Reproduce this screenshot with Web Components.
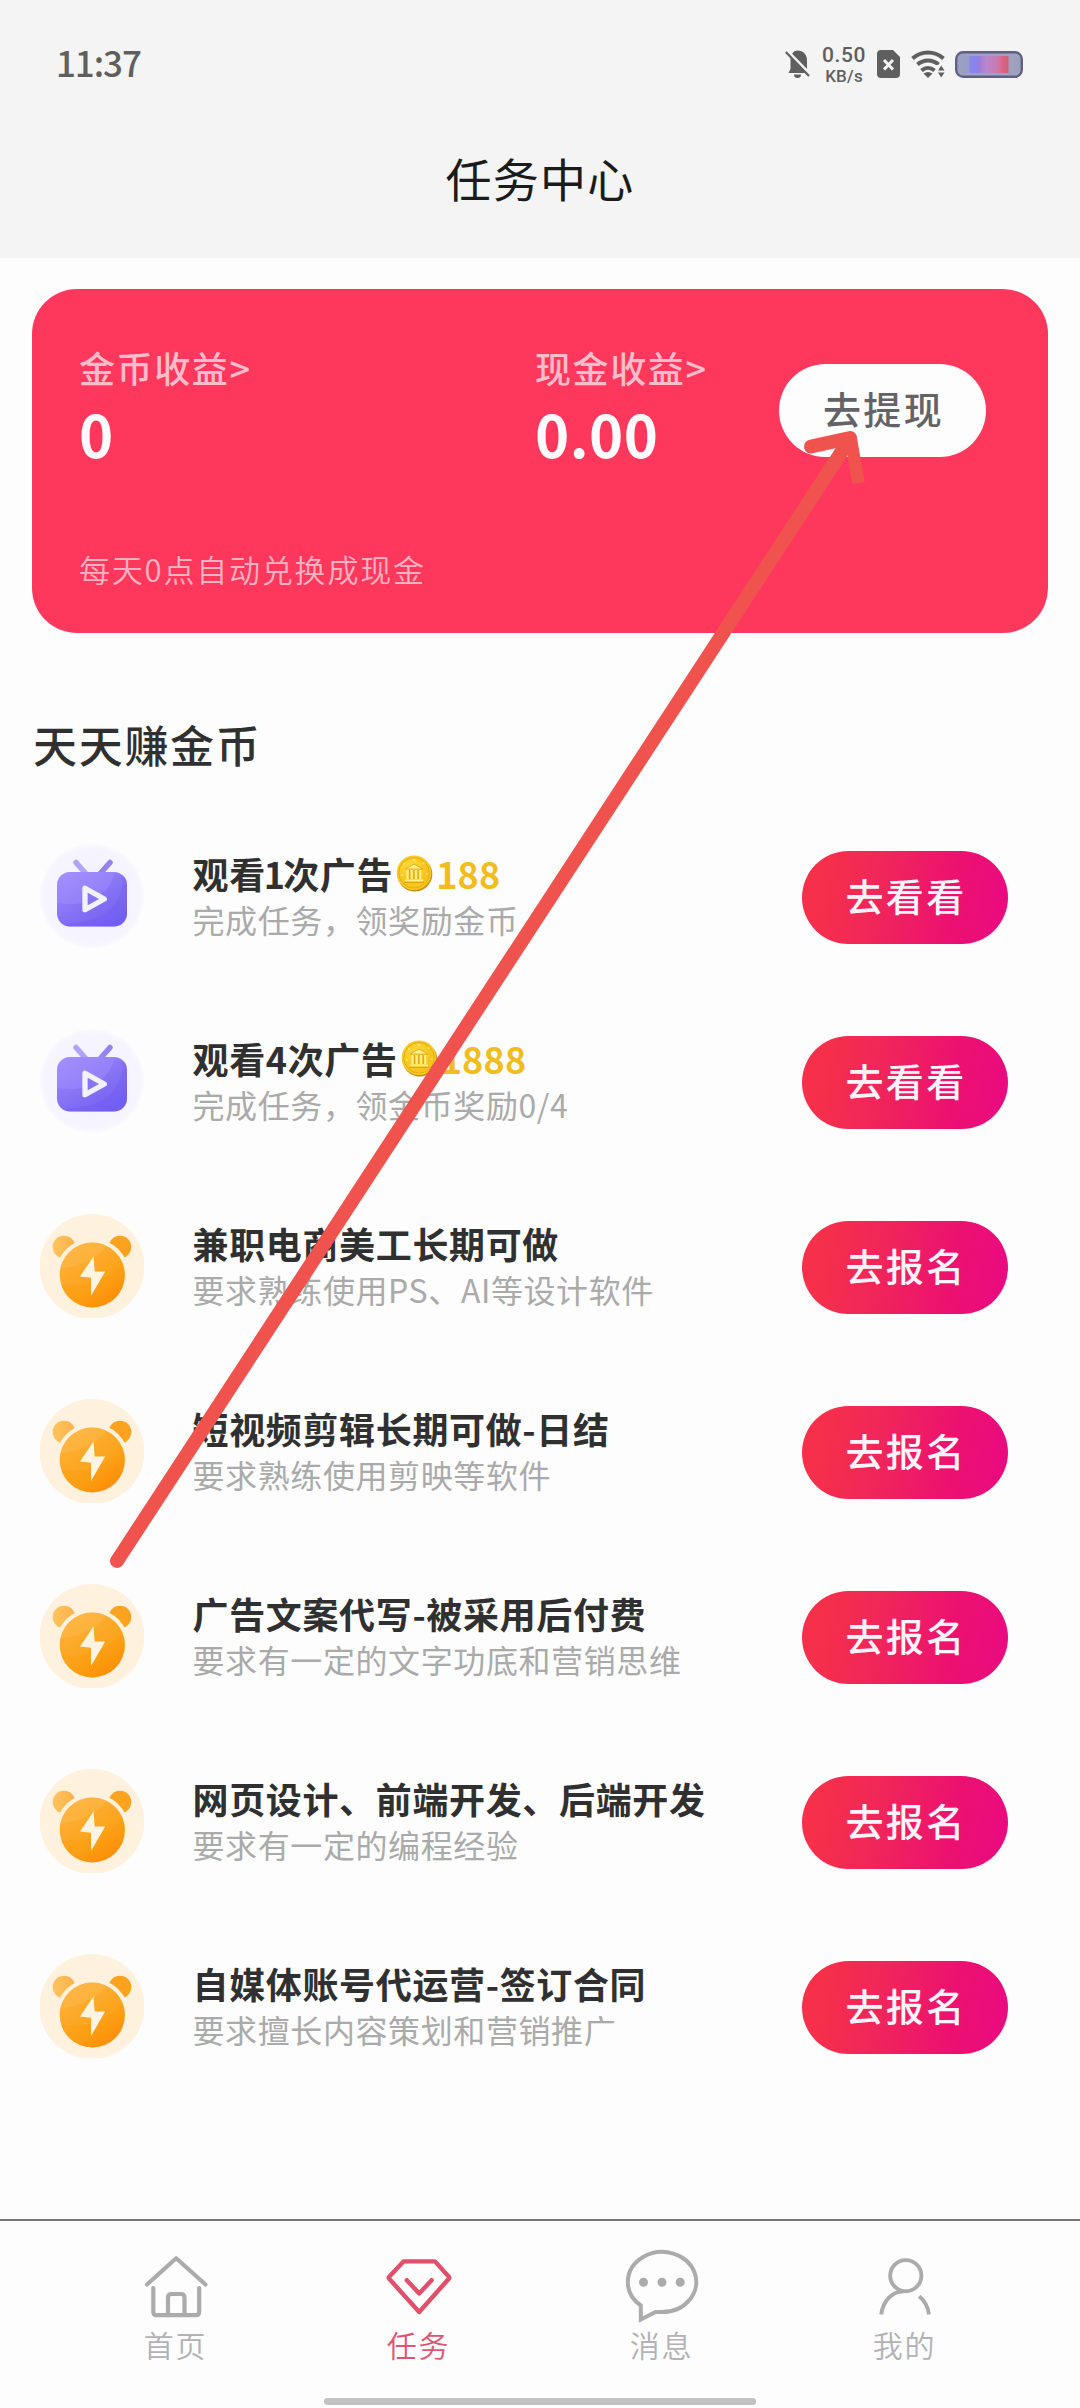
<!DOCTYPE html>
<html lang="zh-CN">
<head>
<meta charset="utf-8">
<title>任务中心</title>
<style>
html,body{margin:0;padding:0}
body{width:1080px;height:2408px;overflow:hidden;background:#fdfdfd;font-family:"Noto Sans CJK SC",sans-serif;color:#303030}
</style>
</head>
<body>
<task-app></task-app>
<script>
const define = (name, html) => {
  const t = document.createElement('template');
  t.innerHTML = html;
  customElements.define(name, class extends HTMLElement {
    constructor() {
      super();
      this.attachShadow({ mode: 'open' }).append(t.content.cloneNode(true));
    }
  });
};

const ICONS = {
  bell: [25, 28, `<path d="M12.5 0.5c5.600 0 9.500 4 9.500 9.500v9.500l2 3.500H3.500l2-4V10C5.500 5 8 .5 12.500 .5z" fill="#5f5f5f"/><path d="M9 24.500h7a3.500 3.500 0 0 1-7 0z" fill="#5f5f5f"/><path d="M2 1 25 24.500" stroke="#f4f4f4" stroke-width="3.500"/><path d="M.8 2 24 26" stroke="#5f5f5f" stroke-width="2.200"/>`],
  sim: [23, 28, `<path d="M4 0h12l7 7v17a4 4 0 0 1-4 4H4a4 4 0 0 1-4-4V4a4 4 0 0 1 4-4z" fill="#5f5f5f"/><path d="m7 10 9 9.500m0-9.500-9 9.500" stroke="#f4f4f4" stroke-width="3"/>`],
  wifi: [34, 28, `<g fill="none" stroke="#5f5f5f" stroke-width="4"><path d="M1.500 8.500c9-8 22-8 31 0"/><path d="M6.500 14.500c6-5.500 15-5.500 21 0"/><path d="M10.500 20.500c4-3.500 9-3.500 13 0"/></g><path d="M12.500 23.500q4.500-3 9 0L17 28z" fill="#5f5f5f"/><rect x="25" y="15" width="9" height="13" fill="#f4f4f4"/><path d="M27 20.500h6.500L30.200 15.500zM27 22.500h6.500L30.200 27.500z" fill="#5f5f5f"/>`],
  battery: [68, 27, `<defs><linearGradient id="b"><stop offset="0" stop-color="#9a9fc0"/><stop offset=".17" stop-color="#989cc8"/><stop offset=".2" stop-color="#8886ee"/><stop offset=".32" stop-color="#8b82e8"/><stop offset=".36" stop-color="#a47cd4"/><stop offset=".45" stop-color="#b886d0"/><stop offset=".64" stop-color="#cc7ab0"/><stop offset=".72" stop-color="#dc6482"/><stop offset=".8" stop-color="#d0607c"/><stop offset=".83" stop-color="#a2a2c0"/><stop offset="1" stop-color="#9aa0ba"/></linearGradient></defs><rect x="1.200" y="1.200" width="65.600" height="24.600" rx="7" fill="#9da3c4" stroke="#625f80" stroke-width="2.400"/><rect x="3" y="5" width="62" height="17" fill="url(#b)"/>`],
  tv: [104, 104, `<defs><radialGradient id="h"><stop offset="0" stop-color="#f3f1ff"/><stop offset=".88" stop-color="#f5f4ff"/><stop offset="1" stop-color="#faf9ff"/></radialGradient><linearGradient id="g" x1="0" y1="0" x2=".7" y2="1"><stop offset="0" stop-color="#a18cfc"/><stop offset="1" stop-color="#7460f0"/></linearGradient><clipPath id="c"><rect x="17" y="29" width="70" height="54.500" rx="13"/></clipPath></defs><circle cx="52" cy="52" r="52" fill="url(#h)"/><g transform="translate(0 -1)"><g fill="none" stroke-width="5.500" stroke-linecap="round"><path d="m36 19.500 11 12.500" stroke="#b0a3fa"/><path d="M70 19.500 59 32" stroke="#9384f2"/></g><rect x="17" y="29" width="70" height="54.500" rx="13" fill="url(#g)"/><g clip-path="url(#c)"><path d="M17 60q30 5 48-12 8-8 10-20H17z" fill="#ad9bff" opacity=".3"/><path d="M30 80q36-1 48-24 6-12 6-28h5v57H17z" fill="#705bf4" opacity=".35"/></g><path d="M45 45.300v21.400L64.300 56z" fill="#8873f3" stroke="#f4f1ff" stroke-width="5.300" stroke-linejoin="round"/></g>`],
  bear: [104, 104, `<defs><linearGradient id="g" x1=".15" y1=".1" x2=".75" y2="1"><stop offset="0" stop-color="#fdb13b"/><stop offset=".62" stop-color="#fca31b"/><stop offset="1" stop-color="#fd8b08"/></linearGradient><linearGradient id="e"><stop offset="0" stop-color="#fdc45e"/><stop offset="1" stop-color="#fcb148"/></linearGradient><clipPath id="c"><circle cx="52.300" cy="61" r="32.600"/></clipPath></defs><circle cx="52" cy="52.500" r="52.500" fill="#fef1de"/><circle cx="24" cy="33" r="11.300" fill="url(#e)"/><circle cx="80" cy="33" r="11.300" fill="#fba31e"/><circle cx="52.300" cy="61" r="36.600" fill="#fef1de"/><circle cx="52.300" cy="61" r="32.600" fill="url(#g)"/><g clip-path="url(#c)"><path d="M18 55q36-4 52-27H18z" fill="#ffc056" opacity=".35"/><path d="M18 70q22 5 42-4 18-8 28-26v56H18z" fill="#ff9500" opacity=".22"/></g><path d="M53.500 42.500 40 62.500l11 1.200V82L65.200 57.500H54.700z" fill="#fff3e2"/>`],
  coin: [37, 37, `<defs><radialGradient id="g" cx=".4" cy=".35"><stop offset="0" stop-color="#ffdb45"/><stop offset="1" stop-color="#f7c51c"/></radialGradient></defs><ellipse cx="18.800" cy="19.200" rx="17.500" ry="17.300" fill="#c98d10"/><circle cx="18" cy="17.800" r="17.300" fill="#f9cc25"/><circle cx="18" cy="17.800" r="15.300" fill="url(#g)" stroke="#e5aa13" stroke-width="1"/><path d="m18 9-9 5h18z" fill="#fff08a" stroke="#dda316" stroke-width=".8"/><path d="M11.500 15v9M15.700 15v9M20 15v9M24.300 15v9" stroke="#fff08a" stroke-width="2"/><path d="M13.600 15v9M17.900 15v9M22.200 15v9" stroke="#d99e13" stroke-width="1"/><path d="M9 25.500h18" stroke="#fff08a" stroke-width="2"/><path d="M8 27.300h20" stroke="#d99e13" stroke-width="1"/><path d="M7 9h1.500M27 8h1.500M5 20h1.500M30 19h1.500M17 5h2" stroke="#fff08a" stroke-width="1.500"/>`],
  home: [80, 80, `<g fill="none" stroke="#ababab" stroke-width="4.200" stroke-linecap="round" stroke-linejoin="round"><path d="M11 39.500 40.200 13.200 69.500 39.500"/><path d="M17.300 43v24q0 3.200 3.200 3.200h39.500q3.200 0 3.200-3.200V43"/><path d="M32 69V52.500q0-3.500 3.500-3.500h9.500q3.500 0 3.500 3.500V69"/></g>`],
  task: [80, 80, `<g fill="none" stroke="#e0506a" stroke-width="4.400" stroke-linecap="round" stroke-linejoin="round"><path d="M24.500 16.400H56l13.800 15.400q.9 1 0 2L40.200 67 10.200 33.800q-.9-1 0-2z"/><path d="M27.800 35.200 40.200 48.500 52.600 35.200"/></g>`],
  chat: [80, 80, `<path d="M18.800 60.500A34.200 30 0 1 1 40 67L33.500 67 18.800 74.500z" fill="none" stroke="#ababab" stroke-width="4"/><circle cx="21.500" cy="37.300" r="4.500" fill="#ababab"/><circle cx="40" cy="37.300" r="4.500" fill="#ababab"/><circle cx="58.200" cy="37.300" r="4.500" fill="#ababab"/>`],
  user: [80, 80, `<g fill="none" stroke="#ababab" stroke-width="3.900"><circle cx="40.800" cy="30.700" r="15.600"/><path d="M16.200 69.500C18 56 27 46.500 38.500 46.300"/><path d="M54.200 51.300Q62.500 58 64 69.500"/></g>`]
};
customElements.define('app-icon', class extends HTMLElement {
  connectedCallback() {
    if (this.shadowRoot) return;
    const [w, h, body] = ICONS[this.getAttribute('name')];
    this.attachShadow({ mode: 'open' }).innerHTML =
      `<style>:host{display:block;flex:none;width:${w}px;height:${h}px}svg{display:block}</style><svg width="${w}" height="${h}" viewBox="0 0 ${w} ${h}">${body}</svg>`;
  }
});

define('status-bar', `<style>
:host{display:flex;height:128px;align-items:center;justify-content:space-between;padding:0 57px 0 56px;box-sizing:border-box;color:#5f5f5f}
.time{font-size:35px;font-weight:500;line-height:40px;letter-spacing:-1.100px;margin-bottom:5px}
.right{display:flex;align-items:center}
.net{display:flex;flex-direction:column;align-items:center;width:46px;margin:2px 10px 0 11px;font-family:Roboto,"Noto Sans CJK SC",sans-serif;font-weight:500}
.net b{font-size:21px;font-weight:500;line-height:21px;letter-spacing:.6px}
.net i{font-size:17px;font-style:normal;line-height:20px;letter-spacing:.2px}
</style><span class="time">11:37</span><div class="right"><app-icon name="bell"></app-icon><span class="net"><b>0.50</b><i>KB/s</i></span><app-icon name="sim"></app-icon><app-icon name="wifi" style="margin:0 10px 0 11px"></app-icon><app-icon name="battery"></app-icon></div>`);

define('page-header', `<style>
:host{display:block;height:258px;background:#f4f4f4}
h1{margin:0;height:100px;line-height:99px;text-align:center;font-size:46px;font-weight:400;letter-spacing:1.300px;color:#1b1b1b}
</style><status-bar></status-bar><h1><slot></slot></h1>`);

define('income-item', `<style>
:host{display:block}
.l{font-size:36px;line-height:50px;letter-spacing:1.600px;font-weight:500;color:#ffbccb}
.v{font-size:58px;line-height:82px;font-weight:700;letter-spacing:.5px;color:#fffafb}
</style><div class="l"><slot name="label"></slot></div><div class="v"><slot></slot></div>`);

define('pill-button', `<style>
:host{display:flex;flex:none;align-items:center;justify-content:center;box-sizing:border-box;width:206px;height:93px;border-radius:47px;font-size:38px;font-weight:500;line-height:56px;letter-spacing:2.300px;padding:0 0 5px 2px;color:#fff3fa;background:linear-gradient(100deg,#f6304a 10%,#f0265a 38%,#ec1170 72%,#e90a82)}
:host([plain]){width:207px;background:#fdfdfd;color:#636367}
</style><slot></slot>`);

define('income-card', `<style>
:host{display:block;height:344px;box-sizing:border-box;border-radius:45px;background:#fe385c;padding:53px 62px 0 47px}
.top{display:flex;height:130px}
.top income-item:first-child{width:456px}
.top pill-button{margin:22px 0 0 auto}
p{margin:77px 0 0;font-size:31px;line-height:40px;letter-spacing:1.800px;font-weight:350;color:#ffb3c2}
</style><div class="top"><income-item><span slot="label">金币收益&gt;</span>0</income-item><income-item><span slot="label">现金收益&gt;</span>0.00</income-item><pill-button plain>去提现</pill-button></div><p>每天0点自动兑换成现金</p>`);

define('coin-reward', `<style>
:host{display:flex;align-items:center;color:#f1bd1e;margin-left:3px;letter-spacing:.2px}
app-icon{margin-right:3px}
</style><app-icon name="coin"></app-icon><slot></slot>`);

customElements.define('task-row', class extends HTMLElement {
  connectedCallback() {
    if (this.shadowRoot) return;
    this.attachShadow({ mode: 'open' }).innerHTML = `<style>
:host{display:flex;align-items:center;height:185px;padding:0 40px 0 8px}
app-icon{margin:0 48.500px 4px 0}
.t{flex:1;margin-bottom:3px;white-space:nowrap}
.h{display:flex;height:46px;font-size:36px;line-height:46px;font-weight:700;letter-spacing:.65px}
.s{font-size:32px;line-height:46px;letter-spacing:.6px;color:#aaa}
::slotted(.one){margin:0 -2.500px 0 -2px}
</style><app-icon name="${this.getAttribute('icon')}"></app-icon><div class="t"><div class="h"><slot></slot></div><div class="s"><slot name="note"></slot></div></div><pill-button>${this.getAttribute('action')}</pill-button>`;
  }
});

customElements.define('nav-item', class extends HTMLElement {
  connectedCallback() {
    if (this.shadowRoot) return;
    this.attachShadow({ mode: 'open' }).innerHTML = `<style>
:host{display:flex;flex-direction:column;align-items:center;width:243px;font-size:30px;line-height:39px;letter-spacing:1.700px;font-weight:350;color:#b2b2b6}
:host([active]){color:#dc5672}
</style><app-icon name="${this.getAttribute('icon')}"></app-icon><span><slot></slot></span>`;
  }
});

define('tab-bar', `<style>
:host{display:flex;flex-direction:column;align-items:center;height:189px;box-sizing:border-box;border-top:2px solid #777}
nav{display:flex;height:177px;padding-top:24px;box-sizing:border-box}
.pill{width:432px;height:7px;border-radius:4px;background:#c1c1c1}
</style><nav><nav-item icon="home">首页</nav-item><nav-item icon="task" active>任务</nav-item><nav-item icon="chat">消息</nav-item><nav-item icon="user">我的</nav-item></nav><div class="pill"></div>`);

define('pointer-arrow', `<style>
:host{position:absolute;left:0;top:0;width:1080px;height:2408px;pointer-events:none}
svg{display:block}
</style><svg width="1080" height="2408" viewBox="0 0 1080 2408" fill="none" stroke="#f0534d"><path d="M117 1561 846 445" stroke-width="14" stroke-linecap="round"/><path d="M811 446.500 850 438" stroke-width="14" stroke-linecap="round" stroke-linejoin="round"/><path d="M850.500 437 858.500 483" stroke-width="12.500"/></svg>`);

define('task-app', `<style>
:host{display:flex;flex-direction:column;position:relative;height:2408px}
main{flex:1;padding:31px 32px 0}
h2{margin:81px 0 31px 1px;font-size:44px;line-height:60px;font-weight:500;letter-spacing:1.700px}
</style>
<page-header>任务中心</page-header>
<main>
<income-card></income-card>
<h2>天天赚金币</h2>
<task-row icon="tv" action="去看看">观看<span class="one">1</span>次广告<coin-reward>188</coin-reward><span slot="note">完成任务，领奖励金币</span></task-row>
<task-row icon="tv" action="去看看">观看4次广告<coin-reward>1888</coin-reward><span slot="note">完成任务，领金币奖励0/4</span></task-row>
<task-row icon="bear" action="去报名">兼职电商美工长期可做<span slot="note">要求熟练使用PS、AI等设计软件</span></task-row>
<task-row icon="bear" action="去报名">短视频剪辑长期可做-日结<span slot="note">要求熟练使用剪映等软件</span></task-row>
<task-row icon="bear" action="去报名">广告文案代写-被采用后付费<span slot="note">要求有一定的文字功底和营销思维</span></task-row>
<task-row icon="bear" action="去报名">网页设计、前端开发、后端开发<span slot="note">要求有一定的编程经验</span></task-row>
<task-row icon="bear" action="去报名">自媒体账号代运营-签订合同<span slot="note">要求擅长内容策划和营销推广</span></task-row>
</main>
<tab-bar></tab-bar>
<pointer-arrow></pointer-arrow>`);
</script>
</body>
</html>
